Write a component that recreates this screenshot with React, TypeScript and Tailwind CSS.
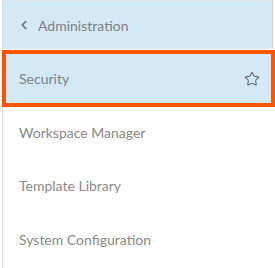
import React from "react";
import { ChevronLeft, Star } from "lucide-react";

export default function App() {
  const font = { fontFamily: 'Lato, "Noto Sans", sans-serif' };
  return (
    <div className="w-[275px] h-[268px] bg-white overflow-hidden" style={font}>
      <div className="ml-[2px] w-[271px] h-[268px] border-l border-[#dcdcdc] flex flex-col">
        <div className="h-[49px] border-t border-[#e6e6e6] border-r border-r-[#d0d0d0] bg-[#d3e9f6] flex items-center pl-[14px] text-[#6f6f6f]">
          <ChevronLeft size={14} strokeWidth={3} />
          <span className="ml-[7px] text-[14px] text-[#808080]">Administration</span>
        </div>
        <div className="-ml-px mt-px w-[273px] h-[57px] border-[4px] border-[#ff5500] bg-[#e8f3fa]">
          <div className="h-full bg-[#d3e9f6] flex items-center justify-between pl-[13px] pr-[11px] text-[#808080]">
            <span className="text-[14px]">Security</span>
            <Star size={16} strokeWidth={1.7} className="text-[#6f6f6f]" />
          </div>
        </div>
        <div className="h-[51px] flex items-center pl-[16px] text-[14px] text-[#8a8a8a]">Workspace Manager</div>
        <div className="h-[54px] flex items-center pl-[16px] text-[14px] text-[#8a8a8a]">Template Library</div>
        <div className="h-[54px] flex items-center pl-[16px] text-[14px] text-[#8a8a8a]">System Configuration</div>
      </div>
    </div>
  );
}
